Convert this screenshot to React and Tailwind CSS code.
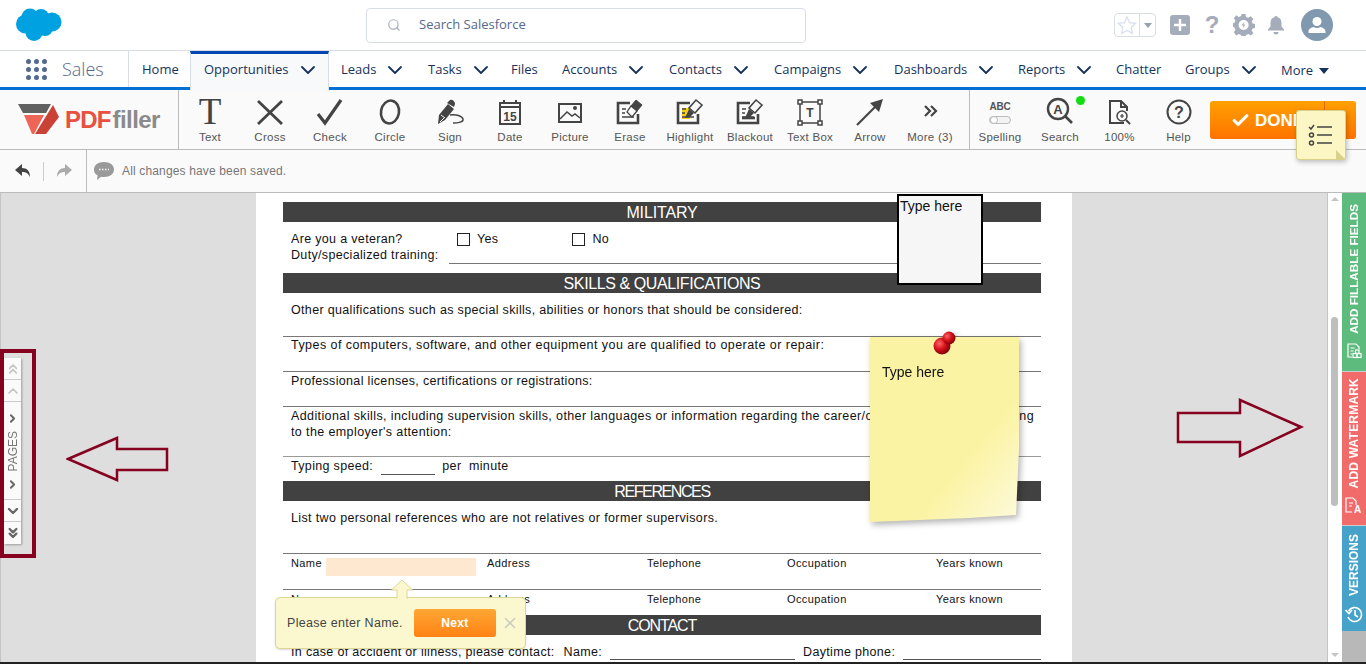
import { ChevronDown, Search, ChevronRight, ChevronUp, ChevronsUp, ChevronsDown, X, Check } from "lucide-react";

const sans = "font-['Open_Sans',sans-serif]";

const navItems = [
  { label: "Leads", w: "w-[87px]", caret: true },
  { label: "Tasks", w: "w-[83px]", caret: true },
  { label: "Files", w: "w-[51px]" },
  { label: "Accounts", w: "w-[107px]", caret: true },
  { label: "Contacts", w: "w-[105px]", caret: true },
  { label: "Campaigns", w: "w-[120px]", caret: true },
  { label: "Dashboards", w: "w-[124px]", caret: true },
  { label: "Reports", w: "w-[98px]", caret: true },
  { label: "Chatter", w: "w-[69px]" },
  { label: "Groups", w: "w-[96px]", caret: true },
];

function Tool({ label, children, width = "w-[60px]" }) {
  return (
    <div className={`${width} flex shrink-0 flex-col items-center`}>
      <div className="flex h-[40px] w-[40px] items-center justify-center">{children}</div>
      <span className="mt-[-2px] whitespace-nowrap text-[11.5px] leading-[14px] tracking-[0.25px] text-[#555]">{label}</span>
    </div>
  );
}

function Ico({ children }) {
  return (
    <svg width="40" height="40" viewBox="0 0 40 40" fill="none" stroke="#444" strokeWidth="2">
      {children}
    </svg>
  );
}

// the page outline with the two or three text lines, shared by erase/highlight/blackout
function MarkerDoc({ children }) {
  return (
    <Ico>
      <path d="M20 11H8v20h20V22" strokeWidth="2.600" />
      {children}
      <path d="M12 17h4M12 21h3M12 25h12" strokeWidth="1.300" />
    </Ico>
  );
}

function DocBar({ title, tracking = "tracking-[-0.4px]" }) {
  return (
    <div className={`flex h-[20px] items-center justify-center bg-[#414141] pt-[1px] text-[16px] text-white ${tracking}`}>
      {title}
    </div>
  );
}

function RefRow({ height = "h-[36px]" }) {
  return (
    <div className={`grid ${height} grid-cols-[43px_161px_160px_140px_149px_1fr] border-t border-[#777] pt-[2px] text-[11px] leading-[14px] tracking-[0.4px] text-[#111]`}>
      <span className="pl-[8px]">Name</span>
      <span />
      <span>Address</span>
      <span>Telephone</span>
      <span>Occupation</span>
      <span>Years known</span>
    </div>
  );
}

export default function App() {
  return (
    <div className="flex h-[664px] w-[1366px] flex-col overflow-hidden bg-white font-['Liberation_Sans',sans-serif]">
      {/* salesforce header */}
      <header className="flex h-[51px] shrink-0 items-center border-b border-[#d8dde6] pl-[16px]">
        <svg width="46" height="33" viewBox="0 0 46 33" className="mb-[1px]">
          <g fill="#00a1e0">
            <circle cx="9.500" cy="16" r="9.500" />
            <circle cx="14" cy="9" r="8.500" />
            <circle cx="25" cy="9" r="8" />
            <circle cx="36" cy="14" r="9.500" />
            <circle cx="18" cy="24.500" r="8.500" />
            <circle cx="29" cy="20" r="8" />
            <circle cx="21" cy="15" r="8" />
          </g>
        </svg>
        <div className="ml-[304px] flex h-[35px] w-[440px] items-center rounded-[4px] border border-[#d8dde6] pl-[20px]">
          <Search size={14} className="text-[#a8b0bd]" strokeWidth={2} />
          <span className={`ml-[18px] text-[13px] text-[#54698d] ${sans}`}>Search Salesforce</span>
        </div>
        <div className="ml-[308px] flex h-[24px] w-[42px] items-center rounded-[4px] border border-[#d8dde6]">
          <svg width="24" height="22" viewBox="0 0 24 22" fill="none" stroke="#d8dfee" strokeWidth="1.300">
            <path d="M12 3l2.600 5.600 6 .7-4.400 4.100 1.200 6-5.400-3-5.400 3 1.200-6-4.400-4.100 6-.7z" />
          </svg>
          <div className="flex h-full flex-1 items-center justify-center border-l border-[#d8dde6]">
            <div className="h-0 w-0 border-x-[4px] border-t-[5px] border-x-transparent border-t-[#97a0ad]" />
          </div>
        </div>
        <div className="ml-[14px] flex h-[20px] w-[20px] items-center justify-center rounded-[3px] bg-[#a5adba]">
          <svg width="14" height="14" viewBox="0 0 14 14" stroke="#fff" strokeWidth="2.400"><path d="M7 1v12M1 7h12" /></svg>
        </div>
        <span className="ml-[12px] w-[20px] text-center text-[24px] font-bold leading-none text-[#a5adba]">?</span>
        <svg width="22" height="22" viewBox="0 0 22 22" className="ml-[11px]">
          <path fill="#a5adba" d="M9 0h4l.6 3 2.400 1 2.600-1.600 2.600 2.900-1.700 2.400.9 2.300 3 .6v3.800l-3 .6-.9 2.300 1.700 2.400-2.600 2.700-2.600-1.600-2.400 1-.6 3H9l-.6-3-2.400-1-2.600 1.600L.8 19l1.700-2.400L1.600 14 0 13.300V9.600l1.600-.6.9-2.300L.8 4.300l2.600-2.900L6 3l2.400-1z" transform="scale(.96)" />
          <circle cx="10.600" cy="11" r="5" fill="#fff" />
          <path fill="#a5adba" d="M11.500 7.500l-3 4h2l-1 3 3-4h-2z" />
        </svg>
        <svg width="20" height="20" viewBox="0 0 20 20" className="ml-[11px]">
          <path fill="#a5adba" d="M10 1a2 2 0 0 1 1.600 1.200C14.300 3 15.500 5 15.500 8v3.500l2.500 3v1H2v-1l2.500-3V8c0-3 1.200-5 3.900-5.800A2 2 0 0 1 10 1z" />
          <path fill="#a5adba" d="M7.500 17h5a2.500 2.500 0 0 1-5 0z" />
        </svg>
        <div className="ml-[15px] flex h-[32px] w-[32px] items-center justify-center rounded-full bg-[#8199af]">
          <svg width="20" height="20" viewBox="0 0 20 20" fill="#fff">
            <circle cx="10" cy="6.500" r="4.500" />
            <path d="M1.500 18v-1.500c0-2.500 3-4 5-4.500 1.800 1.300 5.200 1.300 7 0 2 .5 5 2 5 4.500V18z" />
          </svg>
        </div>
      </header>

      {/* app nav */}
      <nav className={`flex h-[39px] shrink-0 border-b-[3px] border-[#0070d2] text-[13px] text-[#16325c] ${sans}`}>
        <div className="flex w-[129px] items-center border-r border-[#d8dde6] pl-[26px]">
          <div className="grid grid-cols-3 gap-[3px]">
            {Array.from({ length: 9 }).map((_, i) => (
              <span key={i} className="h-[5px] w-[5px] rounded-full bg-[#54698d]" />
            ))}
          </div>
          <span className="ml-[15px] text-[18px] font-light text-[#54698d]">Sales</span>
        </div>
        <div className="flex w-[61px] items-center pl-[13px] pt-[1px]">Home</div>
        <div className="mb-[-3px] flex w-[139px] items-center justify-between border-x border-t-[3px] border-x-[#d8dde6] border-t-[#0047b3] bg-[#f7f9fb] pb-[5px] pl-[13px] pr-[8px]">
          <span>Opportunities</span>
          <ChevronDown size={24} strokeWidth={1.800} />
        </div>
        <div className="flex pl-[12px]">
          {navItems.map((item) => (
            <div key={item.label} className={`${item.w} flex items-center pt-[1px]`}>
              <span>{item.label}</span>
              {item.caret && <ChevronDown size={24} strokeWidth={1.800} className="ml-[7px] shrink-0" />}
            </div>
          ))}
          <div className="flex items-center pt-[3px]">
            <span>More</span>
            <span className="ml-[6px] h-0 w-0 border-x-[5px] border-t-[6px] border-x-transparent border-t-[#16325c]" />
          </div>
        </div>
      </nav>

      {/* pdffiller toolbar */}
      <div className="relative flex h-[60px] shrink-0 border-b border-[#bbb] bg-[#fafafa]">
        <div className="flex w-[179px] items-center border-r border-[#bbb] pl-[18px]">
          <svg width="41" height="31" viewBox="0 0 41 31">
            <path fill="#616161" d="M0 0h33l-5 9H5z" />
            <path fill="#ee6457" d="M6 11h20L16 30H14z" />
            <path fill="#c94235" d="M35 1l6 12-13 17H17z" />
          </svg>
          <span className="ml-[6px] text-[24px] font-bold leading-none tracking-[-0.8px] text-[#e8503f]">PDF</span>
          <span className="ml-[2px] text-[24px] font-bold leading-none tracking-[-0.6px] text-[#8a8a8a]">filler</span>
        </div>
        <div className="flex pl-[1px] pt-[2px]">
          <Tool label="Text">
            <span className="font-['Liberation_Serif',serif] text-[37px] leading-[40px] text-[#444]">T</span>
          </Tool>
          <Tool label="Cross">
            <Ico><path d="M8 9l24 23M32 9L8 32" strokeWidth="2.800" /></Ico>
          </Tool>
          <Tool label="Check">
            <Ico><path d="M8 22l7 9L31 8" strokeWidth="3.200" /></Ico>
          </Tool>
          <Tool label="Circle">
            <Ico><ellipse cx="20" cy="20" rx="9" ry="11.500" transform="rotate(10 20 20)" strokeWidth="2.600" /></Ico>
          </Tool>
          <Tool label="Sign">
            <Ico>
              <path d="M8 32l1-9 9-11 6 5-9 11z" fill="#444" stroke="none" />
              <path d="M17 11l3-3c2-1 5 1 5 4l-1 3z" fill="#444" stroke="none" />
              <path d="M11 23l4 3M10 30l4-4" stroke="#fafafa" strokeWidth="1" />
              <path d="M20 23c6-1 12 1 13 4s-5 4-10 4" strokeWidth="1.500" />
            </Ico>
          </Tool>
          <Tool label="Date">
            <Ico>
              <rect x="10" y="11" width="20" height="21" />
              <path d="M10 15h20M14 8v4M26 8v4" />
              <text x="20" y="29" textAnchor="middle" fontSize="12" fontWeight="700" fill="#444" stroke="none">15</text>
            </Ico>
          </Tool>
          <Tool label="Picture">
            <Ico>
              <rect x="9" y="12" width="22" height="18" />
              <path d="M10 27l7-7 5 4 3-2 5 4" strokeWidth="1.500" />
              <circle cx="25" cy="16" r="2" fill="#444" stroke="none" />
            </Ico>
          </Tool>
          <Tool label="Erase">
            <MarkerDoc>
              <path d="M26 8l6 5-5 6-6-5z" fill="#444" stroke="#444" strokeWidth="1" />
              <path d="M21 14l6 5-5 6-5-5z" fill="#fafafa" strokeWidth="1.300" />
            </MarkerDoc>
          </Tool>
          <Tool label="Highlight">
            <MarkerDoc>
              <rect x="12" y="16" width="8" height="11" fill="#f7cf15" stroke="none" />
              <path d="M26 8l6 5-7 8-6-5z" fill="#fafafa" strokeWidth="1.600" />
              <path d="M19 17l5 4-4 4-5 1z" fill="#444" stroke="none" />
            </MarkerDoc>
          </Tool>
          <Tool label="Blackout">
            <MarkerDoc>
              <path d="M26 8l6 5-7 8-6-5z" fill="#fafafa" strokeWidth="1.600" />
              <path d="M19 17l5 4-4 4-5 1z" fill="#444" stroke="none" />
              <path d="M12 26h13" strokeWidth="2.600" />
            </MarkerDoc>
          </Tool>
          <Tool label="Text Box">
            <Ico>
              <path d="M10 10h20v21H10z" strokeWidth="1.500" />
              <g fill="#fafafa" strokeWidth="1.500">
                <rect x="8" y="8" width="4" height="4" />
                <rect x="28" y="8" width="4" height="4" />
                <rect x="8" y="29" width="4" height="4" />
                <rect x="28" y="29" width="4" height="4" />
              </g>
              <text x="20" y="25" textAnchor="middle" fontSize="12" fontWeight="700" fill="#444" stroke="none">T</text>
            </Ico>
          </Tool>
          <Tool label="Arrow">
            <Ico>
              <path d="M7 33l20-20" strokeWidth="2.200" />
              <path d="M33 7l-4 13-9-9z" fill="#444" stroke="none" />
            </Ico>
          </Tool>
          <Tool label="More (3)" width="w-[69px] pr-[9px]">
            <Ico>
              <path d="M15 14l5 5-5 5M21 14l5 5-5 5" strokeWidth="2.200" />
            </Ico>
          </Tool>
          <div className="mt-[-2px] flex border-l border-[#bbb] pt-[2px]">
            <Tool label="Spelling" width="w-[60px]">
              <div className="flex flex-col items-center pt-[1px]">
                <span className="text-[10px] font-bold leading-[12px] tracking-[-0.2px] text-[#555]">ABC</span>
                <span className="mt-[3px] flex h-[8px] w-[22px] items-center rounded-full border border-[#bbb] bg-[#f3f3f3]">
                  <span className="h-[8px] w-[8px] rounded-full border border-[#bbb] bg-white" />
                </span>
              </div>
            </Tool>
            <Tool label="Search" width="w-[60px]">
              <div className="relative">
                <Ico>
                  <circle cx="18" cy="17" r="10" strokeWidth="2.400" />
                  <path d="M25 24l7 7" strokeWidth="2.600" />
                  <text x="18" y="21.500" textAnchor="middle" fontSize="13" fontWeight="700" fill="#444" stroke="none">A</text>
                </Ico>
                <span className="absolute right-[-5px] top-[4px] h-[9px] w-[9px] rounded-full bg-[#11dd11]" />
              </div>
            </Tool>
            <Tool label="100%" width="w-[59px]">
              <Ico>
                <path d="M24 31H10V9h11l6 6v4M21 9v6h6" />
                <circle cx="22" cy="24" r="5" strokeWidth="1.500" />
                <path d="M26 28l4 4" />
                <path d="M20 24h4M22 22v4" strokeWidth="1.200" />
              </Ico>
            </Tool>
            <Tool label="Help" width="w-[59px]">
              <Ico>
                <circle cx="20" cy="20" r="11.500" />
                <text x="20" y="26" textAnchor="middle" fontSize="16" fontWeight="700" fill="#444" stroke="none">?</text>
              </Ico>
            </Tool>
          </div>
          <div className="ml-[2px] mt-[9px] flex h-[38px] w-[146px] overflow-hidden rounded-[3px] bg-gradient-to-b from-[#ffa000] to-[#ff7200]">
            <div className="flex w-[115px] items-center border-r border-[#e56a00] pl-[21px] pt-[1px] text-[17px] font-bold text-white">
              <Check size={19} strokeWidth={4} className="mr-[5px]" />
              DONE
            </div>
          </div>
        </div>
        {/* checklist note */}
        <div className="absolute left-[1296px] top-[20px] z-20 flex h-[50px] w-[50px] items-center justify-center rounded-[3px] border border-[#d9d08a] bg-[#fcf6c5] shadow-[1px_2px_5px_rgba(0,0,0,0.25)]">
          <svg width="26" height="22" viewBox="0 0 26 22" fill="none" stroke="#444" strokeWidth="1.500">
            <path d="M1 3l2 2 3-4M9 3h15M9 11h15M9 19h15" />
            <circle cx="3.500" cy="11" r="2" />
            <circle cx="3.500" cy="19" r="2" />
          </svg>
          <span className="absolute bottom-0 right-0 h-0 w-0 border-l-[9px] border-t-[9px] border-l-[#d9d08a] border-t-transparent" />
        </div>
      </div>

      {/* undo bar */}
      <div className="flex h-[43px] shrink-0 items-center border-b border-[#bbb] bg-[#fafafa]">
        <div className="flex h-full w-[87px] items-center border-r border-[#bbb] pl-[14px]">
          <svg width="18" height="16" viewBox="0 0 18 16" fill="#444"><path d="M8 1L1 7l7 6V9c4 0 6 1 8 5 0-6-3-9-8-9z" /></svg>
          <span className="ml-[11px] h-[19px] w-px bg-[#ccc]" />
          <svg width="18" height="16" viewBox="0 0 18 16" fill="#aaa" className="ml-[11px] -scale-x-100"><path d="M8 1L1 7l7 6V9c4 0 6 1 8 5 0-6-3-9-8-9z" /></svg>
        </div>
        <svg width="22" height="18" viewBox="0 0 22 18" className="ml-[6px]">
          <path fill="#999" d="M11 0c6 0 10 3 10 7.500S17 15 11 15c-1 0-2 0-3-.3L4 18l.6-4.500C2 12 1 10 1 7.500 1 3 5 0 11 0z" />
          <path stroke="#fff" strokeWidth="1.500" strokeDasharray="1.500 1.500" d="M6 7.500h10" />
        </svg>
        <span className="ml-[7px] text-[12px] tracking-[0.15px] text-[#777]">All changes have been saved.</span>
      </div>

      {/* workspace */}
      <div className="relative flex min-h-0 flex-1 border-b-2 border-[#222] bg-[#dedede]">
        <div className="flex min-w-0 flex-1 justify-center overflow-hidden border-x border-[#c4c4c4]">
          <div className="h-[600px] w-[816px] shrink-0 bg-white pl-[27px] pr-[31px] pt-[9px] text-[12.5px] leading-[16px] tracking-[0.33px] text-[#111]">
            <DocBar title="MILITARY" tracking="tracking-[-0.15px]" />
            <div className="flex h-[41px] pl-[8px] pt-[9px]">
              <div className="flex w-[148px] shrink-0 flex-col">
                <span>Are you a veteran?</span>
                <span className="whitespace-nowrap">Duty/specialized training:</span>
              </div>
              <div className="ml-[18px] flex h-[16px] items-center">
                <span className="h-[13px] w-[13px] border border-[#222]" />
                <span className="ml-[7px]">Yes</span>
                <span className="ml-[74px] h-[13px] w-[13px] border border-[#222]" />
                <span className="ml-[7px]">No</span>
              </div>
            </div>
            <div className="ml-[166px] border-t border-[#777]" />
            <div className="h-[9px]" />
            <DocBar title="SKILLS & QUALIFICATIONS" />
            <div className="h-[44px] border-b border-[#777] pl-[8px] pt-[9px]">Other qualifications such as special skills, abilities or honors that should be considered:</div>
            <div className="h-[35px] border-b border-[#777] pl-[8px] tracking-[0.45px]">Types of computers, software, and other equipment you are qualified to operate or repair:</div>
            <div className="h-[35px] border-b border-[#777] pl-[8px] pt-[1px]">Professional licenses, certifications or registrations:</div>
            <div className="h-[50px] border-b border-[#999] pl-[8px] pt-[1px] tracking-[0.39px]">
              Additional skills, including supervision skills, other languages or information regarding the career/occupation you wish to bring
              <br />
              to the employer's attention:
            </div>
            <div className="h-[24px] pl-[8px] pt-[1px]">
              Typing speed:&nbsp; <span className="inline-block w-[54px] border-b border-[#555]">&nbsp;</span>&nbsp; per&nbsp; minute
            </div>
            <DocBar title="REFERENCES" tracking="tracking-[-1.4px]" />
            <div className="h-[52px] pl-[8px] pt-[9px] tracking-[0.37px]">List two personal references who are not relatives or former supervisors.</div>
            <RefRow />
            <RefRow height="h-[26px]" />
            <DocBar title="CONTACT" tracking="tracking-[-1.1px]" />
            <div className="flex pl-[8px] pt-[9px]">
              <span>In case of accident or illness, please contact:</span>
              <span className="ml-[9px]">Name:</span>
              <span className="ml-[8px] w-[185px] border-b border-[#555]" />
              <span className="ml-[8px]">Daytime phone:</span>
              <span className="ml-[8px] flex-1 border-b border-[#555]" />
            </div>
          </div>
        </div>

        {/* scrollbar */}
        <div className="relative w-[14px] shrink-0 bg-white">
          <div className="absolute left-1/2 top-[4px] h-0 w-0 -translate-x-1/2 border-x-[4px] border-b-[4px] border-x-transparent border-b-[#c4c4c4]" />
          <div className="absolute left-[3px] top-[124px] h-[189px] w-[7px] rounded-full bg-[#bebebe]" />
          <div className="absolute bottom-[5px] left-1/2 h-0 w-0 -translate-x-1/2 border-x-[4px] border-t-[4px] border-x-transparent border-t-[#c4c4c4]" />
        </div>

        {/* side tabs */}
        <div className="flex w-[24px] shrink-0 flex-col bg-[#b8b8b8] text-[12px] font-bold text-white">
          <div className="flex h-[178px] flex-col items-center justify-end bg-[#5dbb7d] pb-[12px]">
            <span className="rotate-180 whitespace-nowrap text-[11.700px] [writing-mode:vertical-rl]">ADD FILLABLE FIELDS</span>
            <svg width="16" height="16" viewBox="0 0 16 16" fill="none" stroke="#fff" strokeWidth="1.200" className="mt-[9px]">
              <path d="M13 6V4l-3-3H2v13h4" />
              <path d="M4.500 5h4M4.500 8h3M4.500 11h1.500" />
              <rect x="9.500" y="7" width="3.500" height="3.500" />
              <rect x="7" y="10.500" width="4" height="4" />
              <rect x="11" y="10.500" width="4" height="4" />
            </svg>
          </div>
          <div className="flex h-[154px] flex-col items-center justify-end border-t border-[#ccc] bg-[#f26b6b] pb-[11px]">
            <span className="rotate-180 whitespace-nowrap tracking-[0.2px] [writing-mode:vertical-rl]">ADD WATERMARK</span>
            <svg width="18" height="17" viewBox="0 0 18 17" fill="none" stroke="#fff" strokeWidth="1.200" className="mt-[9px]">
              <path d="M7 15H1V1h7l3 3v4M4 6h4M4 9h3" />
              <text x="9" y="16" fontSize="10" fontWeight="700" fill="#fff" stroke="none">A</text>
            </svg>
          </div>
          <div className="flex h-[106px] flex-col items-center justify-end border-t border-[#ccc] bg-[#46a2c9] pb-[8px]">
            <span className="rotate-180 whitespace-nowrap [writing-mode:vertical-rl]">VERSIONS</span>
            <svg width="18" height="18" viewBox="0 0 18 18" fill="none" stroke="#fff" strokeWidth="1.600" className="mt-[9px]">
              <path d="M3.500 6A7 7 0 1 1 3 12" />
              <path d="M0.500 5l3.500 3.500L7 5" />
              <path d="M10 5v5l3 2" />
            </svg>
          </div>
        </div>

        {/* pages pager, with the red callout box round it */}
        <div className="absolute left-0 top-[156px] h-[209px] w-[36px] border-[4px] border-[#86001f]">
          <div className="mt-[5px] flex h-[186px] w-[17px] flex-col bg-[#fafafa] text-[#777] shadow-[1px_1px_2px_rgba(0,0,0,0.3)]">
            <div className="flex h-[22px] items-center justify-center border-b border-[#ccc]"><ChevronsUp size={16} strokeWidth={2.500} className="text-[#c4c4c4]" /></div>
            <div className="flex h-[22px] items-center justify-center border-b border-[#ccc]"><ChevronUp size={16} strokeWidth={2.500} className="text-[#c4c4c4]" /></div>
            <div className="flex h-[98px] flex-col items-center justify-between border-b border-[#ccc] pb-[8px] pt-[10px]">
              <ChevronRight size={13} strokeWidth={3.500} className="text-[#666]" />
              <span className="rotate-180 text-[12px] leading-none [writing-mode:vertical-rl]">PAGES</span>
              <ChevronRight size={13} strokeWidth={3.500} className="text-[#666]" />
            </div>
            <div className="flex h-[22px] items-center justify-center border-b border-[#ccc]"><ChevronDown size={16} strokeWidth={3.500} className="text-[#666]" /></div>
            <div className="flex flex-1 items-center justify-center"><ChevronsDown size={16} strokeWidth={3.500} className="text-[#666]" /></div>
          </div>
        </div>

        {/* callout arrows */}
        <svg width="104" height="46" viewBox="0 0 104 46" className="absolute left-[66px] top-[243px]" fill="none" stroke="#86001f" strokeWidth="2.500">
          <path d="M2 23L51 2v11h50v21H51v10z" />
        </svg>
        <svg width="130" height="60" viewBox="0 0 130 60" className="absolute left-[1175px] top-[205px]" fill="none" stroke="#86001f" strokeWidth="2.500">
          <path d="M126 29L65 2v13H3v29h62v14z" />
        </svg>

        {/* text box annotation */}
        <div className="absolute left-[897px] top-[1px] h-[91px] w-[86px] border-2 border-black bg-[#f6f6f6] pl-[1px] pt-[1px] text-[14px] leading-[18px] text-[#111]">Type here</div>

        {/* sticky note */}
        <div className="absolute left-[869px] top-[144px] h-[186px] w-[153px] drop-shadow-[2px_3px_3px_rgba(0,0,0,0.3)]">
          <div className="h-full w-full bg-gradient-to-br from-[#fbf3a4] from-65% to-[#fdfadc] pl-[13px] pt-[26px] text-[14px] leading-[18px] text-[#111] [clip-path:polygon(1px_0,150px_0,150px_60%,147px_178px,100px_181px,1px_185px)]">
            Type here
          </div>
          <svg width="28" height="28" viewBox="0 0 28 28" className="absolute left-[62px] top-[-6px]">
            <defs>
              <radialGradient id="pin" cx="35%" cy="35%" r="70%">
                <stop offset="0%" stopColor="#f66" />
                <stop offset="50%" stopColor="#d4111a" />
                <stop offset="100%" stopColor="#7d0208" />
              </radialGradient>
            </defs>
            <circle cx="11" cy="15" r="8.500" fill="url(#pin)" />
            <path d="M13 11l5-5 3 4-5 4z" fill="#a50a10" />
            <circle cx="18" cy="7" r="6.500" fill="url(#pin)" />
          </svg>
        </div>

        {/* field highlight and its tooltip */}
        <div className="absolute left-[326px] top-[365px] h-[18px] w-[150px] bg-[#fee8cf]" />
        <div className="absolute left-[275px] top-[404px] z-10 flex h-[52px] w-[251px] items-center rounded-[5px] border border-[#dcd795] bg-[#fbf8d0] pl-[11px] text-[12.5px] tracking-[0.3px] text-[#444] shadow-[0_1px_2px_rgba(0,0,0,0.15)]">
          <svg width="24" height="20" viewBox="0 0 24 20" className="absolute left-[114px] top-[-19px]" fill="#fbf8d0" stroke="#dcd795">
            <path d="M7 20v-9H1.500L12 1l10.500 10H17v9" />
            <path d="M7.500 18h9v2h-9z" stroke="none" />
          </svg>
          <span className="whitespace-nowrap">Please enter Name.</span>
          <div className="ml-[11px] flex h-[28px] w-[82px] shrink-0 items-center justify-center rounded-[3px] bg-gradient-to-b from-[#ffa733] to-[#ff8212] text-[12px] font-bold text-white">Next</div>
          <X size={18} strokeWidth={2} className="ml-[5px] shrink-0 text-[#c9c9c0]" />
        </div>
      </div>
    </div>
  );
}
